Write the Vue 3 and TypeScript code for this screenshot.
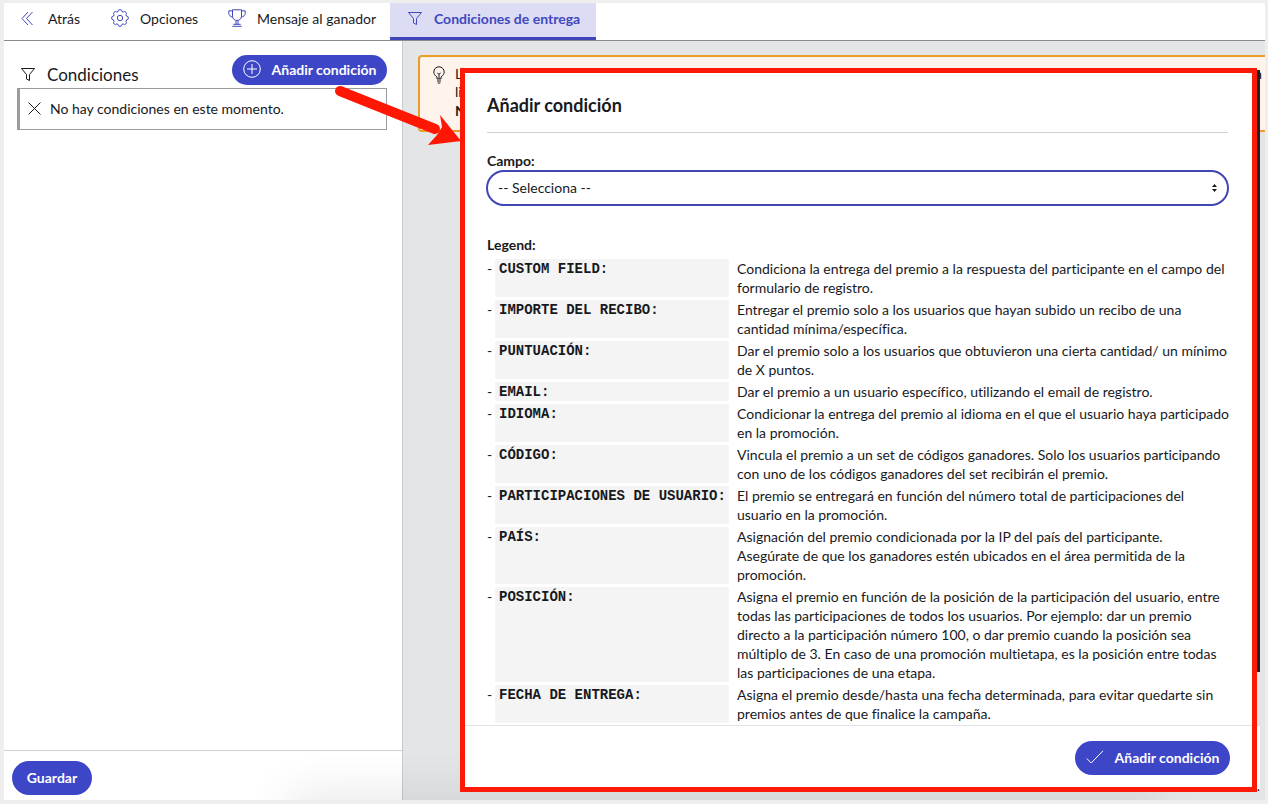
<script setup lang="ts">
import { ref } from 'vue'

interface LegendEntry {
  name: string
  text: string
}

const field = ref('')

const legend: LegendEntry[] = [
  { name: 'CUSTOM FIELD:', text: 'Condiciona la entrega del premio a la respuesta del participante en el campo del\nformulario de registro.' },
  { name: 'IMPORTE DEL RECIBO:', text: 'Entregar el premio solo a los usuarios que hayan subido un recibo de una\ncantidad mínima/específica.' },
  { name: 'PUNTUACIÓN:', text: 'Dar el premio solo a los usuarios que obtuvieron una cierta cantidad/ un mínimo\nde X puntos.' },
  { name: 'EMAIL:', text: 'Dar el premio a un usuario específico, utilizando el email de registro.' },
  { name: 'IDIOMA:', text: 'Condicionar la entrega del premio al idioma en el que el usuario haya participado\nen la promoción.' },
  { name: 'CÓDIGO:', text: 'Vincula el premio a un set de códigos ganadores. Solo los usuarios participando\ncon uno de los códigos ganadores del set recibirán el premio.' },
  { name: 'PARTICIPACIONES DE USUARIO:', text: 'El premio se entregará en función del número total de participaciones del\nusuario en la promoción.' },
  { name: 'PAÍS:', text: 'Asignación del premio condicionada por la IP del país del participante.\nAsegúrate de que los ganadores estén ubicados en el área permitida de la\npromoción.' },
  { name: 'POSICIÓN:', text: 'Asigna el premio en función de la posición de la participación del usuario, entre\ntodas las participaciones de todos los usuarios. Por ejemplo: dar un premio\ndirecto a la participación número 100, o dar premio cuando la posición sea\nmúltiplo de 3. En caso de una promoción multietapa, es la posición entre todas\nlas participaciones de una etapa.' },
  { name: 'FECHA DE ENTREGA:', text: 'Asigna el premio desde/hasta una fecha determinada, para evitar quedarte sin\npremios antes de que finalice la campaña.' },
]
</script>

<template>
  <div class="frame">
    <div class="app">
      <nav class="tabs">
        <a class="tab" href="#atras">
          <svg width="18" height="18" viewBox="0 0 18 18"><path d="M9 3 3 9.500 9 16M13.500 3l-6 6.500 6 6.500" /></svg>
          <span>Atrás</span>
        </a>
        <a class="tab" href="#opciones">
          <svg width="18" height="18" viewBox="0 0 18 18">
            <path d="M7.100 2.500a1.900 1.900 0 0 1 3.800 0l1.300.6a1.900 1.900 0 0 1 2.700 2.700l.6 1.300a1.900 1.900 0 0 1 0 3.800l-.6 1.300a1.900 1.900 0 0 1-2.700 2.700l-1.300.6a1.900 1.900 0 0 1-3.800 0l-1.300-.6a1.900 1.900 0 0 1-2.700-2.700l-.6-1.300a1.900 1.900 0 0 1 0-3.800l.6-1.300a1.900 1.900 0 0 1 2.700-2.700z" />
            <circle cx="9" cy="9" r="2.700" />
          </svg>
          <span>Opciones</span>
        </a>
        <a class="tab" href="#mensaje">
          <svg width="18" height="18" viewBox="0 0 18 18">
            <path d="M4.500.8h9v6.400c0 2.400-2 4.300-4.500 4.300S4.500 9.600 4.500 7.200zM4.500 1.800H.8v2.400c0 2 1.500 3.500 4 3.900M13.500 1.800h3.700v2.400c0 2-1.500 3.500-4 3.900M8 11.500v3.800M10 11.500v3.800M5.300 15.300h7.400M4.300 17.300h9.400" />
          </svg>
          <span>Mensaje al ganador</span>
        </a>
        <a class="tab active" href="#condiciones" aria-current="page">
          <svg width="18" height="18" viewBox="0 0 18 18"><path d="M3.500 3.500h13l-5 6v6l-3-1.500V9.500z" /></svg>
          <span>Condiciones de entrega</span>
        </a>
      </nav>

      <div class="columns">
        <aside class="side">
          <section class="conditions">
            <header class="side-head">
              <h1>
                <svg width="16" height="16" viewBox="0 0 16 16"><path d="M1.500 1.500h13l-5 6v6l-3-1.500V7.500z" /></svg>
                Condiciones
              </h1>
              <button class="pill" type="button">
                <svg width="18" height="18" viewBox="0 0 18 18"><circle cx="9" cy="9" r="8.300" /><path d="M9 4v10M4 9h10" /></svg>
                Añadir condición
              </button>
            </header>
            <p class="empty">
              <svg width="13" height="13" viewBox="0 0 13 13"><path d="m.5.5 12 12m0-12-12 12" /></svg>
              No hay condiciones en este momento.
            </p>
          </section>
          <footer class="side-foot">
            <button class="pill save" type="button">Guardar</button>
          </footer>
        </aside>

        <main class="workspace">
          <div class="notice">
            <svg width="12" height="18" viewBox="0 0 12 18">
              <path d="M4 13v-2C2 9.500.8 8 .8 6a5.200 5.200 0 0 1 10.400 0c0 2-1.200 3.500-3.200 5v2zM4 15h4M4.700 17h2.600M4.300 7l1.700 1.200L7.700 7M6 8.200V13" />
            </svg>
            <div class="notice-text">
              <p class="first"><span>L</span><span>a</span></p>
              <p>li</p>
              <p><b>N</b></p>
            </div>
          </div>

          <div class="backdrop-edge"></div>
          <div class="footer-edge">.</div>

          <form class="dialog" role="dialog" aria-labelledby="dialog-title" @submit.prevent>
            <div class="dialog-body">
              <h2 id="dialog-title">Añadir condición</h2>
              <label for="campo">Campo:</label>
              <div class="select-wrap">
                <select id="campo" v-model="field">
                  <option value="">-- Selecciona --</option>
                  <option v-for="entry in legend" :key="entry.name" :value="entry.name">{{ entry.name }}</option>
                </select>
                <svg width="5" height="8" viewBox="0 0 5 8"><path d="M0 3h5L2.500 0zM0 5h5L2.500 8z" /></svg>
              </div>
              <h3>Legend:</h3>
              <ul class="legend">
                <li v-for="entry in legend" :key="entry.name">
                  <span>-</span>
                  <code>{{ entry.name }}</code>
                  <p>{{ entry.text }}</p>
                </li>
              </ul>
            </div>
            <footer class="dialog-foot">
              <button class="pill confirm" type="submit">
                <svg width="18" height="14" viewBox="0 0 18 14"><path d="m.8 8.500 4.400 4.500L17 .8" /></svg>
                Añadir condición
              </button>
            </footer>
          </form>
        </main>
      </div>
      <div class="bottom-shade"></div>
      <svg class="arrow" width="130" height="64" viewBox="0 0 130 64">
        <path class="shaft" d="m12 13 95 38" />
        <path class="head" d="m133 63-33 4 9-10 5-8-2-12z" />
      </svg>
    </div>
  </div>
</template>

<style>
body {
  margin: 0;
}
</style>

<style scoped>
* {
  box-sizing: border-box;
}
.frame {
  height: 100vh;
  padding: 3px 3px 4px 4px;
  background: #eeeeef;
  color: #18191d;
  font-family: Lato, "Liberation Sans", sans-serif;
  font-size: 14px;
  font-variant-ligatures: none;
  line-height: 19px;
}
h1, h2, h3, p, ul {
  margin: 0;
  padding: 0;
}
svg {
  flex: none;
  fill: none;
  stroke: currentColor;
  stroke-width: 1;
}
.app {
  position: relative;
  display: flex;
  flex-direction: column;
  height: 100%;
  overflow: hidden;
  background: #fff;
}
.tabs {
  display: grid;
  grid-template-columns: 92px 117px 177px 206px;
  height: 38px;
  flex: none;
  border-bottom: 1px solid #8b8b8d;
}
.tab {
  display: flex;
  align-items: center;
  gap: 11px;
  padding: 0 0 7px 15px;
  color: inherit;
  text-decoration: none;
  white-space: nowrap;
}
.tab svg {
  color: #4147bd;
}
.tab.active {
  padding-bottom: 4px;
  border-bottom: 3px solid #4045ba;
  background: #dcdcf5;
  color: #4147bd;
  font-weight: 700;
}
.columns {
  display: flex;
  flex: 1;
  min-height: 0;
}
.side {
  display: flex;
  flex-direction: column;
  width: 399px;
  flex: none;
  border-right: 1px solid #c9cacc;
}
.conditions {
  flex: 1;
  padding: 14px 15px 0 13px;
}
.side-head {
  display: flex;
  justify-content: space-between;
  align-items: flex-start;
}
h1 {
  display: flex;
  align-items: center;
  gap: 11px;
  padding: 10px 0 0 3px;
  font-size: 17px;
  font-weight: 400;
  line-height: 20px;
}
.pill {
  display: flex;
  align-items: center;
  justify-content: center;
  gap: 11px;
  width: 155px;
  height: 30px;
  padding: 0 0 2px;
  border: 0;
  border-radius: 17px;
  background: #3d46c7;
  color: #fff;
  font: inherit;
  font-weight: 700;
  white-space: nowrap;
}
.empty {
  display: flex;
  align-items: center;
  gap: 9px;
  height: 42px;
  margin-top: 3px;
  padding: 0 0 2px 8px;
  border: 1px solid #9b9b9d;
  border-left-width: 3px;
}
.side-foot {
  height: 50px;
  padding: 10px 8px;
  border-top: 1px solid #cfd0d2;
}
.pill.save {
  width: 80px;
  height: 34px;
}
.workspace {
  position: relative;
  flex: 1;
  min-width: 0;
  overflow: hidden;
  background: #e4e5e7;
}
.notice {
  display: flex;
  gap: 10px;
  height: 77px;
  margin: 14px -6px 0 15px;
  padding: 9px 7px 0 13px;
  border: 2px solid #eb9b28;
  border-radius: 4px;
  background: #fff4ec;
}
.notice-text {
  flex: 1;
}
.notice-text .first {
  display: flex;
  justify-content: space-between;
  line-height: 16px;
}
.backdrop-edge {
  position: absolute;
  top: 29px;
  right: 5px;
  bottom: 128px;
  width: 10px;
  background: #231f21;
}
.footer-edge {
  position: absolute;
  right: 5px;
  bottom: 9px;
  width: 10px;
  height: 66px;
  padding-top: 50px;
  border-top: 1px solid #dcdddf;
  background: #fff;
  text-align: right;
}
.dialog {
  position: absolute;
  inset: 27px 8px 8px 57px;
  display: flex;
  flex-direction: column;
  border: 5px solid #fb1a08;
  background: #fff;
}
.dialog-body {
  flex: 1;
  min-height: 0;
  padding: 22px 23px 0 21px;
  overflow: hidden;
}
h2 {
  margin: 0 1px 18px;
  padding-bottom: 17px;
  border-bottom: 1px solid #d0d1d3;
  font-size: 18px;
  line-height: 20px;
}
label, h3 {
  display: block;
  margin-left: 1px;
  font-size: 14px;
  font-weight: 700;
}
.select-wrap {
  position: relative;
}
select {
  display: block;
  width: 100%;
  height: 36px;
  padding: 0 30px 2px 10px;
  border: 2px solid #4147b5;
  border-radius: 18px;
  appearance: none;
  background: #fff;
  color: inherit;
  font: inherit;
}
.select-wrap svg {
  position: absolute;
  top: 14px;
  right: 12px;
  fill: #18191d;
  stroke: none;
}
h3 {
  margin-top: 29px;
  margin-bottom: 5px;
}
.legend {
  display: flex;
  flex-direction: column;
  gap: 3px;
  margin-left: 1px;
  list-style: none;
}
.legend li {
  display: grid;
  grid-template-columns: 8px 234px 1fr;
}
.legend code {
  padding: 2px 0 0 4px;
  border-radius: 2px;
  background: #f4f4f4;
  font-family: "Liberation Mono", monospace;
  font-size: 14px;
  font-weight: 700;
  line-height: 17px;
}
.legend p {
  padding-left: 8px;
  white-space: pre;
}
.dialog-foot {
  display: flex;
  justify-content: flex-end;
  height: 62px;
  padding: 15px 22px 0;
  border-top: 1px solid #e2e3e5;
}
.pill.confirm {
  height: 34px;
}
.bottom-shade {
  position: absolute;
  bottom: -16px;
  left: 286px;
  right: 110px;
  height: 10px;
  border-radius: 5px;
  box-shadow: 0 0 48px 4px rgba(0, 0, 0, 0.2);
}
.dialog, .arrow {
  z-index: 2;
}
.arrow {
  position: absolute;
  top: 75px;
  left: 324px;
  overflow: visible;
}
.shaft {
  stroke: #ff1704;
  stroke-width: 10;
  stroke-linecap: round;
}
.head {
  fill: #ff1704;
  stroke: none;
}
</style>
